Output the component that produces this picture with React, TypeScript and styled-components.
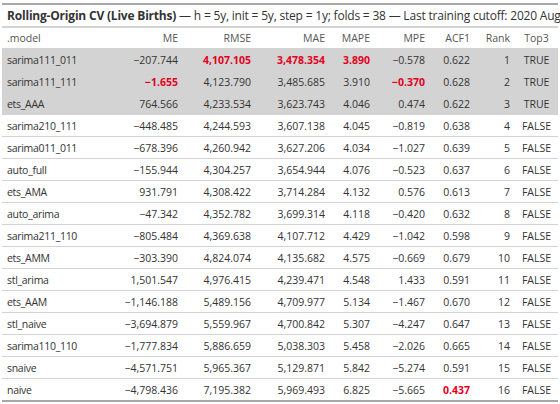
import React from 'react';
import styled, { createGlobalStyle } from 'styled-components';

interface Row {
  model: string;
  me: string;
  rmse: string;
  mae: string;
  mape: string;
  mpe: string;
  acf1: string;
  rank: number;
  top3: boolean;
  hot?: string[];
}

const rows: Row[] = [
  { model: 'sarima111_011', me: '−207.744', rmse: '4,107.105', mae: '3,478.354', mape: '3.890', mpe: '−0.578', acf1: '0.622', rank: 1, top3: true, hot: ['rmse', 'mae', 'mape'] },
  { model: 'sarima111_111', me: '−1.655', rmse: '4,123.790', mae: '3,485.685', mape: '3.910', mpe: '−0.370', acf1: '0.628', rank: 2, top3: true, hot: ['me', 'mpe'] },
  { model: 'ets_AAA', me: '764.566', rmse: '4,233.534', mae: '3,623.743', mape: '4.046', mpe: '0.474', acf1: '0.622', rank: 3, top3: true },
  { model: 'sarima210_111', me: '−448.485', rmse: '4,244.593', mae: '3,607.138', mape: '4.045', mpe: '−0.819', acf1: '0.638', rank: 4, top3: false },
  { model: 'sarima011_011', me: '−678.396', rmse: '4,260.942', mae: '3,627.206', mape: '4.034', mpe: '−1.027', acf1: '0.639', rank: 5, top3: false },
  { model: 'auto_full', me: '−155.944', rmse: '4,304.257', mae: '3,654.944', mape: '4.076', mpe: '−0.523', acf1: '0.637', rank: 6, top3: false },
  { model: 'ets_AMA', me: '931.791', rmse: '4,308.422', mae: '3,714.284', mape: '4.132', mpe: '0.576', acf1: '0.613', rank: 7, top3: false },
  { model: 'auto_arima', me: '−47.342', rmse: '4,352.782', mae: '3,699.314', mape: '4.118', mpe: '−0.420', acf1: '0.632', rank: 8, top3: false },
  { model: 'sarima211_110', me: '−805.484', rmse: '4,369.638', mae: '4,107.712', mape: '4.429', mpe: '−1.042', acf1: '0.598', rank: 9, top3: false },
  { model: 'ets_AMM', me: '−303.390', rmse: '4,824.074', mae: '4,135.682', mape: '4.575', mpe: '−0.669', acf1: '0.679', rank: 10, top3: false },
  { model: 'stl_arima', me: '1,501.547', rmse: '4,976.415', mae: '4,239.471', mape: '4.548', mpe: '1.433', acf1: '0.591', rank: 11, top3: false },
  { model: 'ets_AAM', me: '−1,146.188', rmse: '5,489.156', mae: '4,709.977', mape: '5.134', mpe: '−1.467', acf1: '0.670', rank: 12, top3: false },
  { model: 'stl_naive', me: '−3,694.879', rmse: '5,559.967', mae: '4,700.842', mape: '5.307', mpe: '−4.247', acf1: '0.647', rank: 13, top3: false },
  { model: 'sarima110_110', me: '−1,777.834', rmse: '5,886.659', mae: '5,038.303', mape: '5.458', mpe: '−2.026', acf1: '0.665', rank: 14, top3: false },
  { model: 'snaive', me: '−4,571.751', rmse: '5,965.367', mae: '5,129.871', mape: '5.842', mpe: '−5.274', acf1: '0.591', rank: 15, top3: false },
  { model: 'naive', me: '−4,798.436', rmse: '7,195.382', mae: '5,969.493', mape: '6.825', mpe: '−5.665', acf1: '0.437', rank: 16, top3: false, hot: ['acf1'] },
];

const widths = [113, 68, 73, 74, 45, 55, 45, 40, 43];

const metricKeys = ['me', 'rmse', 'mae', 'mape', 'mpe', 'acf1'] as const;
const metricLabels = ['ME', 'RMSE', 'MAE', 'MAPE', 'MPE', 'ACF1'];

const App: React.FC = () => {
  return (
    <>
      <GlobalStyle />
      <Table>
        <colgroup>
          {widths.map((w, i) => (
            <col key={i} style={{ width: w }} />
          ))}
        </colgroup>
        <thead>
          <tr>
            <Title colSpan={9}>
              <strong>Rolling-Origin CV (Live Births)</strong> — h = 5y, init = 5y, step = 1y; folds = 38 — Last
              training cutoff: 2020 Aug
            </Title>
          </tr>
          <tr>
            <Head align="left">.model</Head>
            {metricLabels.map(l => (
              <Head key={l} align="right">
                {l}
              </Head>
            ))}
            <Head align="right">Rank</Head>
            <Head align="center">Top3</Head>
          </tr>
        </thead>
        <tbody>
          {rows.map(r => (
            <BodyRow key={r.model} $shaded={r.top3}>
              <ModelCell>{r.model}</ModelCell>
              {metricKeys.map(k => (
                <Cell key={k} align="right" $hot={r.hot?.includes(k)}>
                  {r[k]}
                </Cell>
              ))}
              <Cell align="right">{r.rank}</Cell>
              <Cell align="center">{r.top3 ? 'TRUE' : 'FALSE'}</Cell>
            </BodyRow>
          ))}
        </tbody>
      </Table>
    </>
  );
};

export default App;

const GlobalStyle = createGlobalStyle`
  html, body {
    margin: 0;
    padding: 0;
    background: #fff;
  }
  body {
    font-family: "Open Sans", "Noto Sans", sans-serif;
    color: #333;
  }
`;

const Table = styled.table`
  margin: 3px 2px 0;
  width: 556px;
  table-layout: fixed;
  border-collapse: collapse;
  border-top: 2px solid #a8a8a8;
  border-bottom: 2px solid #a8a8a8;
  font-size: 10.5px;
  color: #333;
`;

const Title = styled.th`
  text-align: left;
  font-weight: normal;
  font-size: 12px;
  letter-spacing: -0.2px;
  color: #333;
  padding: 2px 5px 2px;
  height: 17px;
  white-space: nowrap;
  border-bottom: 2px solid #d3d3d3;

  strong {
    font-weight: bold;
  }
`;

const Head = styled.th<{ align: string }>`
  text-align: ${p => p.align};
  font-weight: normal;
  padding: 0 5px;
  height: 20px;
  color: #555;
  border-bottom: 1px solid #d3d3d3;
`;

const BodyRow = styled.tr<{ $shaded?: boolean }>`
  background: ${p => (p.$shaded ? '#d3d3d3' : 'transparent')};
`;

const Cell = styled.td<{ align: string; $hot?: boolean }>`
  text-align: ${p => p.align};
  padding: 0 5px;
  height: 21px;
  white-space: nowrap;
  border-top: 1px solid #d3d3d3;
  color: ${p => (p.$hot ? '#e3001b' : '#333')};
  font-weight: ${p => (p.$hot ? 'bold' : 'normal')};
`;

const ModelCell = styled.td`
  text-align: left;
  padding: 0 5px;
  height: 21px;
  white-space: nowrap;
  letter-spacing: -0.3px;
  border-top: 1px solid #d3d3d3;
  color: #333;
`;
